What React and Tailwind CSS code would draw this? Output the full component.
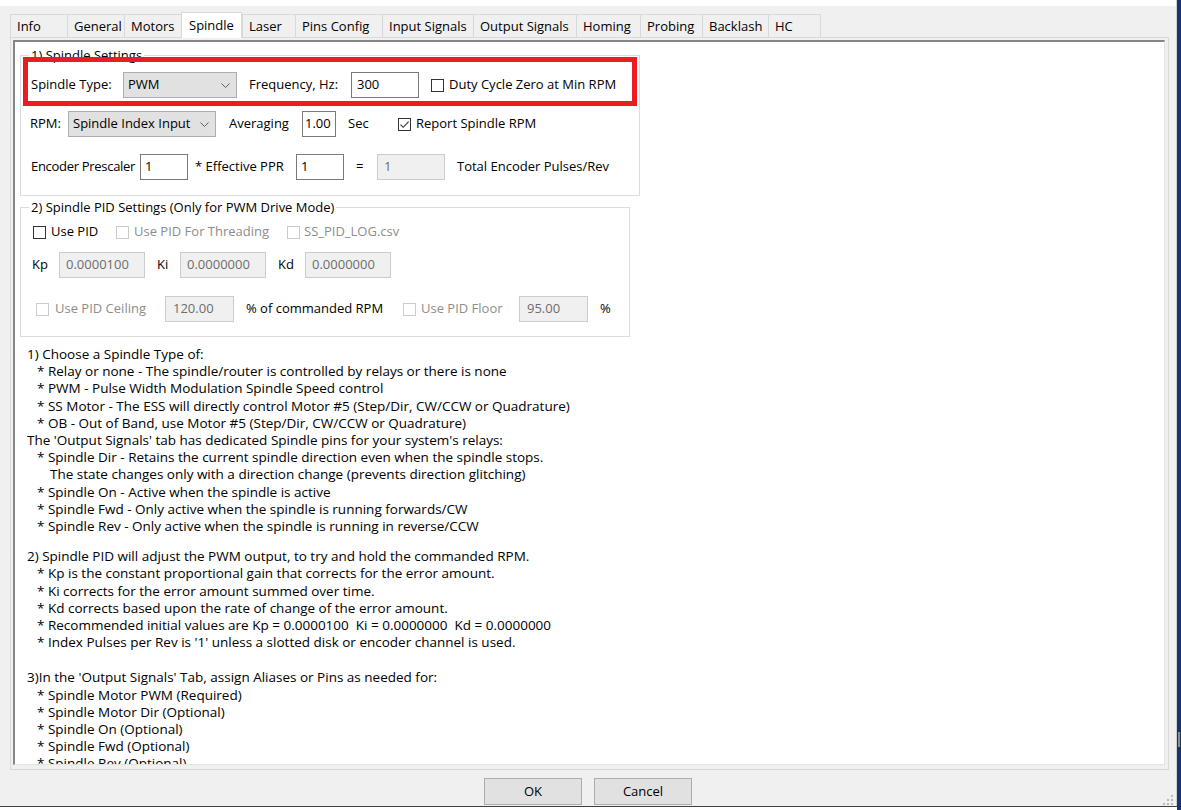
import React from "react";

const tabs = [
  { label: "Info", w: "w-[57px]" },
  { label: "General", w: "w-[57px]" },
  { label: "Motors", w: "w-[57px]" },
  { label: "Spindle", w: "w-[61px]", active: true },
  { label: "Laser", w: "w-[53px]" },
  { label: "Pins Config", w: "w-[87px]" },
  { label: "Input Signals", w: "w-[91px]" },
  { label: "Output Signals", w: "w-[103px]" },
  { label: "Homing", w: "w-[64px]" },
  { label: "Probing", w: "w-[62px]" },
  { label: "Backlash", w: "w-[66px]" },
  { label: "HC", w: "w-[53px]" },
];

const help1 = [
  ["", "1) Choose a Spindle Type of:"],
  ["b", "* Relay or none - The spindle/router is controlled by relays or there is none"],
  ["b", "* PWM - Pulse Width Modulation Spindle Speed control"],
  ["b", "* SS Motor - The ESS will directly control Motor #5 (Step/Dir, CW/CCW or Quadrature)"],
  ["b", "* OB - Out of Band, use Motor #5 (Step/Dir, CW/CCW or Quadrature)"],
  ["", "The 'Output Signals' tab has dedicated Spindle pins for your system's relays:"],
  ["b", "* Spindle Dir - Retains the current spindle direction even when the spindle stops."],
  ["c", "The state changes only with a direction change (prevents direction glitching)"],
  ["b", "* Spindle On - Active when the spindle is active"],
  ["b", "* Spindle Fwd - Only active when the spindle is running forwards/CW"],
  ["b", "* Spindle Rev - Only active when the spindle is running in reverse/CCW"],
];

const help2 = [
  ["", "2) Spindle PID will adjust the PWM output, to try and hold the commanded RPM."],
  ["b", "* Kp is the constant proportional gain that corrects for the error amount."],
  ["b", "* Ki corrects for the error amount summed over time."],
  ["b", "* Kd corrects based upon the rate of change of the error amount."],
  ["b", "* Recommended initial values are Kp = 0.0000100  Ki = 0.0000000  Kd = 0.0000000"],
  ["b", "* Index Pulses per Rev is '1' unless a slotted disk or encoder channel is used."],
];

const help3 = [
  ["", "3)In the 'Output Signals' Tab, assign Aliases or Pins as needed for:"],
  ["b", "* Spindle Motor PWM (Required)"],
  ["b", "* Spindle Motor Dir (Optional)"],
  ["b", "* Spindle On (Optional)"],
  ["b", "* Spindle Fwd (Optional)"],
  ["b", "* Spindle Rev (Optional)"],
];

function Check({ checked, disabled }) {
  return (
    <span
      className={
        "w-[13px] h-[13px] shrink-0 border bg-white flex items-center justify-center " +
        (disabled ? "border-[#cccccc]" : "border-[#333333]")
      }
    >
      {checked && (
        <svg width="11" height="11" viewBox="0 0 11 11">
          <path d="M1.5 5.6 L4.2 8.3 L9.6 2.6" fill="none" stroke="#333333" strokeWidth="1.1" />
        </svg>
      )}
    </span>
  );
}

function Select({ value, w }) {
  return (
    <div className={w + " h-[26px] shrink-0 bg-[#e1e1e1] border border-[#adadad] flex items-center justify-between pl-[4px] pr-[6px] whitespace-nowrap"}>
      <span>{value}</span>
      <svg width="9" height="5" viewBox="0 0 9 5">
        <path d="M0.5 0.5 L4.5 4.5 L8.5 0.5" fill="none" stroke="#606060" strokeWidth="1" />
      </svg>
    </div>
  );
}

function Field({ value, w, disabled, pad = "pl-[5px]" }) {
  return (
    <div
      className={
        w + " " + pad + " h-[26px] shrink-0 border flex items-center " +
        (disabled ? "bg-[#f0f0f0] border-[#cccccc] text-[#6d6d6d]" : "bg-white border-[#7a7a7a]")
      }
    >
      {value}
    </div>
  );
}

function HelpBlock({ lines, className }) {
  return (
    <div className={"ml-[12px] text-[13.5px] leading-[17.2px] whitespace-pre " + className}>
      {lines.map(([kind, text], i) => (
        <div key={i} className={kind === "b" ? "pl-[10px]" : kind === "c" ? "pl-[23px]" : ""}>
          {text}
        </div>
      ))}
    </div>
  );
}

export default function App() {
  return (
    <div className="w-[1181px] h-[810px] overflow-hidden flex bg-white font-['Open_Sans',sans-serif] text-[13px] text-black">
      <div className="w-[1177px] h-[810px] flex flex-col">
        <div className="h-[806px] flex flex-col bg-[#f0f0f0] border-r border-[#cfcfcf] relative">
          <div className="h-[6px] bg-white" />

          {/* TABS */}
          <div className="h-[31px] ml-[10px] flex items-end">
            {tabs.map((t) =>
              t.active ? (
                <div
                  key={t.label}
                  className={t.w + " h-[26px] relative top-[1px] z-10 bg-white border border-b-0 border-[#d9d9d9] pl-[7px] flex items-center"}
                >
                  {t.label}
                </div>
              ) : (
                <div
                  key={t.label}
                  className={t.w + " h-[23px] border-t border-l border-[#d9d9d9] last:border-r pl-[6px] pt-[1px] flex items-center whitespace-nowrap"}
                >
                  {t.label}
                </div>
              )
            )}
          </div>

          {/* PANEL */}
          <div className="ml-[10px] w-[1159px] h-[733px] border border-[#d9d9d9] pl-[2px] pt-[2px] pr-[3px] pb-[4px]">
            <div className="h-full bg-white border-t-2 border-l-2 border-t-[#868686] border-l-[#868686] border-r border-b border-r-[#e3e3e3] border-b-[#e3e3e3] overflow-hidden whitespace-nowrap">
              {/* 1) Spindle Settings */}
              <fieldset className="ml-[5px] mt-[5px] w-[620px] border border-[#dcdcdc] pb-[15px]">
                <legend className="ml-[8px] px-[2px] leading-[16px]">1) Spindle Settings</legend>
                <div className="mt-[9px] pl-[10px] h-[26px] flex items-center">
                  <span className="w-[92px] shrink-0">Spindle Type:</span>
                  <Select value="PWM" w="w-[114px]" />
                  <span className="ml-[12px] w-[102px] shrink-0">Frequency, Hz:</span>
                  <Field value="300" w="w-[68px]" />
                  <span className="ml-[12px]"><Check /></span>
                  <span className="ml-[5px]">Duty Cycle Zero at Min RPM</span>
                </div>
                <div className="mt-[13px] pl-[9px] h-[26px] flex items-center">
                  <span className="w-[38px] shrink-0">RPM:</span>
                  <Select value="Spindle Index Input" w="w-[148px]" />
                  <span className="ml-[13px] w-[73px] shrink-0">Averaging</span>
                  <Field value="1.00" w="w-[34px]" pad="pl-[2px]" />
                  <span className="ml-[12px] w-[50px] shrink-0">Sec</span>
                  <Check checked />
                  <span className="ml-[5px]">Report Spindle RPM</span>
                </div>
                <div className="mt-[17px] pl-[10px] h-[26px] flex items-center">
                  <span className="w-[109px] shrink-0 tracking-[-0.3px]">Encoder Prescaler</span>
                  <Field value="1" w="w-[48px]" pad="pl-[4px]" />
                  <span className="ml-[7px] w-[101px] shrink-0">* Effective PPR</span>
                  <Field value="1" w="w-[48px]" pad="pl-[4px]" />
                  <span className="ml-[12px] w-[21px] shrink-0">=</span>
                  <Field value="1" w="w-[68px]" pad="pl-[6px]" disabled />
                  <span className="ml-[12px]">Total Encoder Pulses/Rev</span>
                </div>
              </fieldset>

              {/* 2) Spindle PID Settings */}
              <fieldset className="ml-[5px] mt-[3px] w-[610px] border border-[#dcdcdc] pb-[14px]">
                <legend className="ml-[8px] px-[2px] leading-[16px]">2) Spindle PID Settings (Only for PWM Drive Mode)</legend>
                <div className="mt-[9px] pl-[12px] h-[16px] flex items-center">
                  <Check />
                  <span className="ml-[5px] w-[65px] shrink-0">Use PID</span>
                  <Check disabled />
                  <span className="ml-[5px] w-[153px] shrink-0 text-[#8d8d8d]">Use PID For Threading</span>
                  <Check disabled />
                  <span className="ml-[4px] text-[#8d8d8d]">SS_PID_LOG.csv</span>
                </div>
                <div className="mt-[12px] pl-[11px] h-[26px] flex items-center">
                  <span className="w-[27px] shrink-0">Kp</span>
                  <Field value="0.0000100" w="w-[86px]" pad="pl-[6px]" disabled />
                  <span className="ml-[12px] w-[23px] shrink-0">Ki</span>
                  <Field value="0.0000000" w="w-[86px]" pad="pl-[6px]" disabled />
                  <span className="ml-[12px] w-[27px] shrink-0">Kd</span>
                  <Field value="0.0000000" w="w-[86px]" pad="pl-[6px]" disabled />
                </div>
                <div className="mt-[18px] pl-[15px] h-[26px] flex items-center">
                  <Check disabled />
                  <span className="ml-[6px] w-[110px] shrink-0 text-[#8d8d8d]">Use PID Ceiling</span>
                  <Field value="120.00" w="w-[69px]" pad="pl-[7px]" disabled />
                  <span className="ml-[12px] w-[157px] shrink-0">% of commanded RPM</span>
                  <Check disabled />
                  <span className="ml-[5px] w-[98px] shrink-0 text-[#8d8d8d]">Use PID Floor</span>
                  <Field value="95.00" w="w-[69px]" pad="pl-[7px]" disabled />
                  <span className="ml-[12px]">%</span>
                </div>
              </fieldset>

              <HelpBlock lines={help1} className="mt-[9px]" />
              <HelpBlock lines={help2} className="mt-[13px]" />
              <HelpBlock lines={help3} className="mt-[18px]" />
            </div>
          </div>

          {/* BUTTONS */}
          <div className="mt-[8px] flex justify-center gap-[12px]">
            <button className="w-[98px] h-[27px] bg-[#e1e1e1] border border-[#adadad]">OK</button>
            <button className="w-[98px] h-[27px] bg-[#e1e1e1] border border-[#adadad]">Cancel</button>
          </div>

          {/* size grip */}
          <svg className="absolute right-[3px] bottom-[1px]" width="10" height="10" viewBox="0 0 10 10">
            <rect x="8" y="0" width="2" height="2" fill="#b8b8b8" />
            <rect x="4" y="4" width="2" height="2" fill="#b8b8b8" />
            <rect x="8" y="4" width="2" height="2" fill="#b8b8b8" />
            <rect x="0" y="8" width="2" height="2" fill="#b8b8b8" />
            <rect x="4" y="8" width="2" height="2" fill="#b8b8b8" />
            <rect x="8" y="8" width="2" height="2" fill="#b8b8b8" />
          </svg>

          {/* red highlight */}
          <div className="absolute left-[23px] top-[57px] w-[614px] h-[49px] border-[5px] border-[#ed1c24]" />
        </div>
        <div className="h-[1px] bg-[#404040]" />
        <div className="flex-1 bg-white" />
      </div>
      <div className="w-[4px] h-[810px] bg-[#10386a] flex flex-col">
        <div className="h-[732px]" />
        <div className="ml-[1px] w-[2px] h-[15px] bg-[#8c8c8c]" />
      </div>
    </div>
  );
}
